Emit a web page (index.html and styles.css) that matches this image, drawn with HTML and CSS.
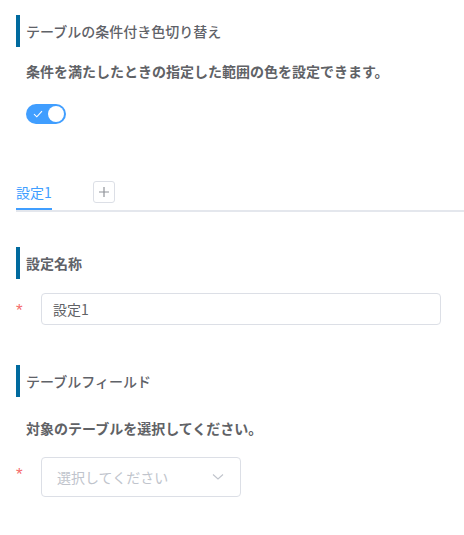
FILE: index.html
```html
<!DOCTYPE html>
<html lang="ja">
<head>
<meta charset="utf-8">
<title>テーブルの条件付き色切り替え</title>
<link rel="stylesheet" href="styles.css">
</head>
<body>
<div class="page">
  <div class="sec-title t1"><span class="bar"></span><span class="sec-text">テーブルの条件付き色切り替え</span></div>
  <div class="desc d1">条件を満たしたときの指定した範囲の色を設定できます。</div>
  <div class="switch">
    <svg class="check" width="10" height="8" viewBox="0 0 10 8"><path d="M1 4.2 L3.8 6.8 L9 1.2" fill="none" stroke="#ffffff" stroke-width="1.1"/></svg>
    <span class="knob"></span>
  </div>

  <div class="tabs">
    <div class="tab active">設定1</div>
    <div class="new-tab">
      <svg width="12" height="12" viewBox="0 0 12 12"><path d="M6 1 V11 M1 6 H11" stroke="#909399" stroke-width="1.2"/></svg>
    </div>
  </div>

  <div class="sec-title t2"><span class="bar"></span><span class="sec-text bold">設定名称</span></div>
  <div class="row r1">
    <span class="req">*</span>
    <div class="input">設定1</div>
  </div>

  <div class="sec-title t3"><span class="bar"></span><span class="sec-text">テーブルフィールド</span></div>
  <div class="desc d2">対象のテーブルを選択してください。</div>
  <div class="row r2">
    <span class="req">*</span>
    <div class="select">
      <span class="placeholder">選択してください</span>
      <svg class="arrow" width="12" height="8" viewBox="0 0 12 8"><path d="M1 1.5 L6 6 L11 1.5" fill="none" stroke="#c0c4cc" stroke-width="1.1"/></svg>
    </div>
  </div>
</div>
</body>
</html>
```

FILE: styles.css
```css
html, body {
  margin: 0;
  padding: 0;
  background: #ffffff;
}
body {
  font-family: "Noto Sans CJK JP", "Noto Sans", sans-serif;
  font-size: 14px;
  color: #606266;
}
.page {
  padding: 15px 0 0 16px;
  display: flex;
  flex-direction: column;
  align-items: flex-start;
}
.sec-title {
  display: flex;
  align-items: center;
  height: 32px;
}
.bar {
  width: 4px;
  height: 32px;
  background: #006a9e;
}
.sec-text {
  padding-left: 6px;
  font-size: 14px;
  line-height: 32px;
  font-weight: 500;
  color: #5f6268;
}
.sec-text.bold {
  font-weight: 700;
}
.desc {
  padding-left: 10px;
  line-height: 20px;
  font-weight: 700;
  color: #606266;
}
.d1 { margin-top: 14px; }
.switch {
  margin-top: 23px;
  margin-left: 10px;
  width: 40px;
  height: 20px;
  border-radius: 10px;
  background: #409eff;
  position: relative;
  display: flex;
  align-items: center;
}
.check {
  margin-left: 7px;
}
.knob {
  position: absolute;
  right: 2px;
  top: 2px;
  width: 16px;
  height: 16px;
  border-radius: 50%;
  background: #ffffff;
}
.tabs {
  margin-top: 48px;
  width: 448px;
  height: 38px;
  border-bottom: 2px solid #e4e7ed;
  display: flex;
  align-items: flex-start;
}
.tab {
  height: 36px;
  line-height: 40px;
  font-size: 14px;
  color: #409eff;
  border-bottom: 2px solid #409eff;
  margin-bottom: -2px;
}
.new-tab {
  margin-top: 9px;
  margin-left: 41px;
  width: 20px;
  height: 20px;
  border: 1px solid #dcdfe6;
  border-radius: 3px;
  display: flex;
  align-items: center;
  justify-content: center;
}
.t2 { margin-top: 35px; }
.row {
  display: flex;
  align-items: center;
}
.r1 { margin-top: 14px; }
.req {
  width: 25px;
  color: #f56c6c;
  font-family: "Liberation Sans", Arial, sans-serif;
  font-size: 17px;
  line-height: 20px;
  padding-top: 3px;
}
.input {
  width: 400px;
  height: 32px;
  box-sizing: border-box;
  border: 1px solid #dcdfe6;
  border-radius: 4px;
  padding-left: 11px;
  line-height: 30px;
  color: #606266;
  font-size: 14px;
}
.t3 { margin-top: 40px; }
.d2 { margin-top: 21px; }
.r2 { margin-top: 19px; align-items: flex-start; }
.r2 .req { margin-top: 5px; }
.select {
  width: 200px;
  height: 40px;
  box-sizing: border-box;
  border: 1px solid #dcdfe6;
  border-radius: 4px;
  padding: 0 15px;
  display: flex;
  align-items: center;
  justify-content: space-between;
}
.placeholder {
  color: #c0c4cc;
  font-size: 14px;
}
.arrow {
  margin-right: 1px;
}
```
